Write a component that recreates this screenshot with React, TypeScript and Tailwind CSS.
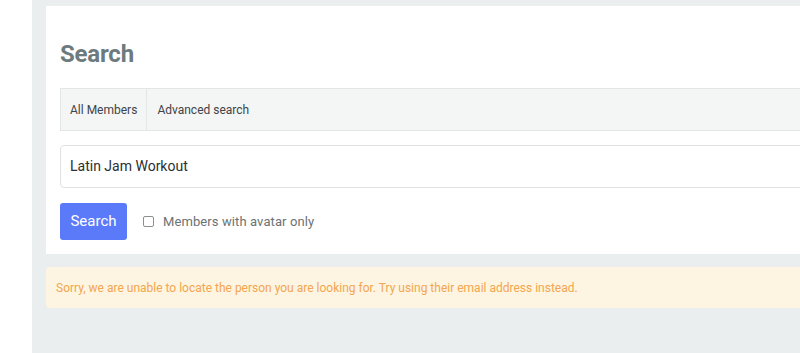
import React from "react";

export default function App() {
  return (
    <div
      className="flex h-[353px] w-[800px] overflow-hidden bg-white"
      style={{ fontFamily: "Roboto, 'Open Sans', sans-serif" }}
    >
      <div className="w-[32px] shrink-0 bg-white" />
      <div className="flex min-w-0 flex-1 flex-col bg-[#ebeeef] pl-[14px] pt-[6px]">
        <div className="w-[780px] shrink-0 bg-white pb-[14px] pl-[14px] pt-[33px]">
          <h1 className="text-[24px] font-bold leading-[30px] tracking-[-0.2px] text-[#6d7b7f]">
            Search
          </h1>
          <div className="mt-[19px] flex h-[43px] items-stretch border border-[#e3e6e6] bg-[#f4f5f5] text-[12px] text-[#3f4446]">
            <div className="flex items-center border-r border-[#e3e6e6] px-[9px]">All Members</div>
            <div className="flex items-center px-[10px]">Advanced search</div>
          </div>
          <div className="mt-[14px] flex h-[43px] items-center rounded-[4px] border border-[#dfe3e4] bg-white pl-[9px] text-[14px] text-[#2b2f31]">
            Latin Jam Workout
          </div>
          <div className="mt-[15px] flex items-center">
            <button className="h-[37px] w-[67px] rounded-[3px] bg-[#5a7afa] text-[15px] text-white">
              Search
            </button>
            <span className="ml-[16px] h-[11px] w-[11px] rounded-[2px] border border-[#8a8f91] bg-white" />
            <span className="ml-[9px] text-[13px] tracking-[0.1px] text-[#6b7274]">Members with avatar only</span>
          </div>
        </div>
        <div className="mt-[13px] flex h-[41px] w-[780px] shrink-0 items-center rounded-[4px] bg-[#fdf5e1] pl-[10px] text-[12px] text-[#f3a54f]">
          Sorry, we are unable to locate the person you are looking for. Try using their email address instead.
        </div>
      </div>
    </div>
  );
}
